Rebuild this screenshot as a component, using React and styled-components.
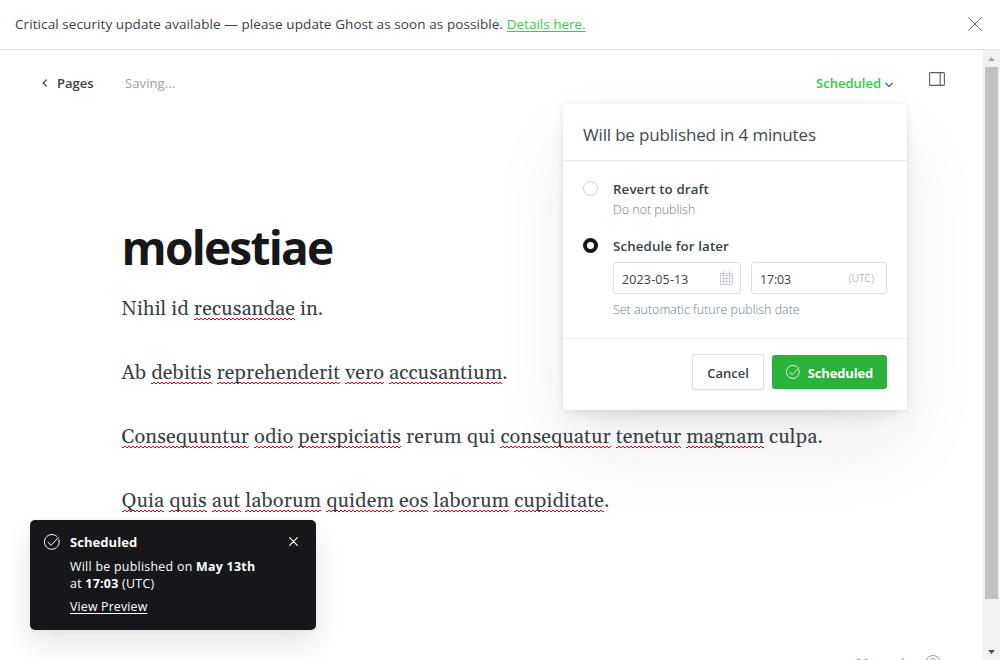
import React from 'react';
import styled, { createGlobalStyle } from 'styled-components';

const Global = createGlobalStyle`
  * { box-sizing: border-box; }
  html, body { margin: 0; padding: 0; overflow: hidden; }
  body { font-family: "Open Sans", "Noto Sans", sans-serif; color: #394047; background: #fff; }
`;

const Page = styled.div`
  width: 1000px; height: 660px; overflow: hidden; background: #fff;
  display: flex; flex-direction: column; position: relative;
`;
const Banner = styled.div`
  height: 50px; flex: none; border-bottom: 1px solid #dfe1e3;
  display: flex; align-items: center; justify-content: space-between;
  padding: 0 18px 2px 15px; font-size: 13.5px;
`;
const BannerText = styled.div`white-space: nowrap; letter-spacing: .085px;`;
const BannerLink = styled.a`color: #30cf43; text-decoration: underline; text-underline-offset: 2px; letter-spacing: 0;`;
const Main = styled.div`flex: 1; min-height: 0; display: flex;`;
const Editor = styled.div`flex: 1; min-width: 0; display: flex; flex-direction: column;`;
const Header = styled.header`
  height: 66px; flex: none; display: flex; align-items: center; padding: 0 38px 0 41px;
`;
const Back = styled.div`display: flex; align-items: center; gap: 9px; font-size: 13px; font-weight: 600; width: 84px;`;
const Status = styled.div`font-size: 13px; color: #95a1ad; flex: 1; letter-spacing: .1px;`;
const Trigger = styled.div`
  display: flex; align-items: center; gap: 4px; font-size: 13px; font-weight: 600; color: #30cf43;
  margin-right: 36px;
  svg { margin-top: 3px; }
`;
const PanelIcon = styled.div`height: 16px; display: flex; margin-top: -8px;`;
const Content = styled.main`flex: 1; min-height: 0; padding: 98px 0 0 121.5px; color: #394047;`;
const Title = styled.h1`
  margin: 0; font-size: 46px; line-height: 66px; font-weight: 700; color: #15171a; white-space: nowrap;
  letter-spacing: -1.75px;
`;
const Para = styled.p`
  margin: 0 0 32px; font-family: Gelasio, Georgia, "Liberation Serif", serif; font-size: 20px; line-height: 32px;
  white-space: nowrap; letter-spacing: .1px;
  &:first-of-type { margin-top: 13px; }
`;
const Misspelt = styled.span`
  background: repeating-conic-gradient(#f00 0 25%, transparent 0 50%) left 0 bottom 2px / 4px 2px repeat-x;
`;
const Scrollbar = styled.div`
  width: 17px; flex: none; background: #f1f1f1; display: flex; flex-direction: column; align-items: center;
`;
const ScrollEnd = styled.div`height: 17px; flex: none; display: flex; align-items: center;`;
const Track = styled.div`flex: 1; min-height: 0;`;
const Thumb = styled.div`width: 13px; height: 532px; background: #c1c1c1;`;
const Count = styled.div`
  position: absolute; left: 855px; top: 654px; display: flex; gap: 13px; color: #95a1ad; font-size: 13px; line-height: 18px;
  svg { display: block; }
`;

const Popover = styled.section`
  position: absolute; left: 563px; top: 104px; width: 344px; height: 306px; border-radius: 4px; background: #fff;
  box-shadow: 0 0 7px rgba(0,0,0,.06), 0 2px 10px rgba(0,0,0,.03), 0 37px 80px rgba(0,0,0,.07), 0 12px 20px -6px rgba(0,0,0,.08);
  display: flex; flex-direction: column;
`;
const PopHeader = styled.div`
  height: 57px; padding: 5px 20px 0; display: flex; align-items: center; border-bottom: 1px solid #e8eaec;
  font-size: 17px; white-space: nowrap; letter-spacing: -.17px; color: #434a52;
`;
const PopBody = styled.div`height: 178px; padding: 18px 20px 0; border-bottom: 1px solid #e8eaec;`;
const Option = styled.div`display: grid; grid-template-columns: 15px 1fr; column-gap: 15px; margin-bottom: ${p => p.$mb || 0}px;`;
const Radio = styled.span`
  width: 15px; height: 15px; border-radius: 50%; margin-top: 2px;
  border: ${p => (p.$on ? '4px solid #15171a' : '1px solid #ced4d9')};
`;
const Label = styled.div`font-size: 13.3px; line-height: 21px; font-weight: 600; letter-spacing: .12px;`;
const Hint = styled.div`font-size: 12.4px; line-height: 20px; color: #667a90; font-weight: 300; letter-spacing: .02px;`;
const Fields = styled.div`display: flex; gap: 10px; margin: 5px 0 6px;`;
const Field = styled.div`
  width: ${p => p.$w}px; height: 32px; border: 1px solid #dde1e5; border-radius: 3px; padding: 0 ${p => p.$pr}px 0 8px;
  display: flex; align-items: center; justify-content: space-between; font-size: 12.4px;
`;
const Value = styled.span`padding-top: 2px; letter-spacing: ${p => p.$ls || '0'};`;
const Zone = styled.span`font-size: 10.5px; color: #8995a2; font-weight: 300;`;
const PopFooter = styled.div`display: flex; justify-content: flex-end; align-items: flex-start; gap: 8px; padding: 15px 20px 0;`;
const Button = styled.button`
  font: 600 13px "Open Sans", "Noto Sans", sans-serif; padding: 2px 0 0; border-radius: 3px;
  display: flex; align-items: center; justify-content: center; gap: 8px; white-space: nowrap;
  ${p => p.$primary
    ? 'width: 115px; height: 34px; margin-top: 1px; background: #2ab23b; color: #fff; border: 0; font-weight: 700; letter-spacing: -.15px; svg { margin-top: -3px; }'
    : 'width: 72px; height: 36px; background: #fff; color: #394047; border: 1px solid #dde1e5; box-shadow: 0 1px 1px rgba(0,0,0,.06);'}
`;

const Toast = styled.aside`
  position: absolute; left: 30px; top: 520px; width: 286px; height: 110px; border-radius: 5px; background: #15171a; color: #fff;
  box-shadow: 0 0 5px rgba(0,0,0,.05), 0 14px 28px rgba(0,0,0,.1);
  display: grid; grid-template-columns: 17px 1fr 9px; column-gap: 9px; padding: 13px 18px 0 14px;
  font-size: 12.4px; line-height: 17px;
  > svg { margin-top: 1px; }
  > svg:last-child { margin-top: 4px; }
`;
const ToastTitle = styled.div`font-size: 13px; line-height: 18px; font-weight: 700; margin-bottom: 7px; letter-spacing: .05px;`;
const ToastText = styled.div`white-space: nowrap; letter-spacing: .27px;`;
const ToastLink = styled.a`display: block; margin-top: 6px; text-decoration: underline; text-underline-offset: 2px; letter-spacing: .15px;`;

const CheckCircle = ({ size, color = '#fff' }) => (
  <svg width={size} height={size} viewBox="0 0 16 16" fill="none" stroke={color} strokeWidth="1" strokeLinecap="round" strokeLinejoin="round">
    <path d="M14.900 5.700A7.400 7.400 0 1 1 12.700 2.300" />
    <path d="m4.200 8.500 3 2.700 7.400-8" />
  </svg>
);
const Cross = ({ size, color, w = 1 }) => (
  <svg width={size} height={size} viewBox={`0 0 ${size} ${size}`} stroke={color} strokeWidth={w} strokeLinecap="round">
    <path d={`M.7.7 ${size - 0.7} ${size - 0.7}M${size - 0.7}.7.7 ${size - 0.7}`} />
  </svg>
);
const Calendar = () => (
  <svg width="13" height="14" viewBox="0 0 13 14" fill="none" stroke="#c8cfd7" strokeWidth="1">
    <path d="M.5 2.500h12v11H.5zM3.500 0v4M9.500 0v4M.5 4.500h12M2 7.500h9M2 10.500h9M3.500 5v8M6.500 5v8M9.500 5v8" />
  </svg>
);

const paragraphs = [
  'Nihil id *recusandae in.',
  'Ab *debitis *reprehenderit *vero *accusantium.',
  '*Consequuntur *odio *perspiciatis rerum qui *consequatur *tenetur *magnam culpa.',
  '*Quia *quis *aut *laborum *quidem *eos *laborum *cupiditate.',
];
// A leading asterisk marks a word the spell checker underlines.
const renderWords = text => text.split(' ').map((word, i) => {
  const lead = i ? ' ' : '';
  if (word[0] !== '*') return lead + word;
  const bare = word.slice(1).replace('.', '');
  return <React.Fragment key={i}>{lead}<Misspelt>{bare}</Misspelt>{word.endsWith('.') ? '.' : ''}</React.Fragment>;
});

export default function App() {
  return (
    <Page>
      <Global />
      <Banner>
        <BannerText>Critical security update available — please update Ghost as soon as possible. <BannerLink>Details here.</BannerLink></BannerText>
        <Cross size={14} color="#54606b" />
      </Banner>
      <Main>
        <Editor>
          <Header>
            <Back>
              <svg width="7" height="8" viewBox="0 0 7 8" fill="none" stroke="#394047" strokeWidth="1.3"><path d="M5.600.6 2.200 4l3.400 3.400" /></svg>
              Pages
            </Back>
            <Status>Saving...</Status>
            <Trigger>
              Scheduled
              <svg width="8" height="6" viewBox="0 0 8 6" fill="none" stroke="#626d79" strokeWidth="1.4"><path d="m.5 1 3.500 3.600L7.500 1" /></svg>
            </Trigger>
            <PanelIcon>
              <svg width="16" height="16" viewBox="0 0 16 16" fill="none" stroke="#54606b" strokeWidth="1.1"><rect x=".6" y="1.600" width="14.800" height="12.800" rx="1" /><path d="M11.200 1.500v13" /></svg>
            </PanelIcon>
          </Header>
          <Content>
            <Title>molestiae</Title>
            {paragraphs.map((p, i) => <Para key={i}>{renderWords(p)}</Para>)}
          </Content>
        </Editor>
        <Scrollbar>
          <ScrollEnd><svg width="7" height="4"><path d="M0 4 3.500 0 7 4z" fill="#a3a3a3" /></svg></ScrollEnd>
          <Track><Thumb /></Track>
          <ScrollEnd><svg width="7" height="4"><path d="M0 0h7L3.500 4z" fill="#505050" /></svg></ScrollEnd>
        </Scrollbar>
      </Main>
      <Popover>
        <PopHeader>Will be published in 4 minutes</PopHeader>
        <PopBody>
          <Option $mb={16}>
            <Radio />
            <div><Label>Revert to draft</Label><Hint>Do not publish</Hint></div>
          </Option>
          <Option>
            <Radio $on />
            <div>
              <Label>Schedule for later</Label>
              <Fields>
                <Field $w={128} $pr={7}><Value $ls=".2px">2023-05-13</Value><Calendar /></Field>
                <Field $w={136} $pr={12}><Value $ls="-.1px">17:03</Value><Zone>(UTC)</Zone></Field>
              </Fields>
              <Hint>Set automatic future publish date</Hint>
            </div>
          </Option>
        </PopBody>
        <PopFooter>
          <Button>Cancel</Button>
          <Button $primary><CheckCircle size={14} />Scheduled</Button>
        </PopFooter>
      </Popover>
      <Toast>
        <CheckCircle size={16} />
        <div>
          <ToastTitle>Scheduled</ToastTitle>
          <ToastText>Will be published on <b>May 13th</b><br />at <b>17:03</b> (UTC)</ToastText>
          <ToastLink>View Preview</ToastLink>
        </div>
        <Cross size={9} color="#fff" w={1.2} />
      </Toast>
      <Count>
        <span>20 words</span>
        <svg width="18" height="18" viewBox="0 0 18 18" fill="none" stroke="#95a1ad"><circle cx="9" cy="9" r="7.500" /><path d="M6.500 7a2.500 2.500 0 1 1 3.700 2.200Q9 9.800 9 11" /></svg>
      </Count>
    </Page>
  );
}
